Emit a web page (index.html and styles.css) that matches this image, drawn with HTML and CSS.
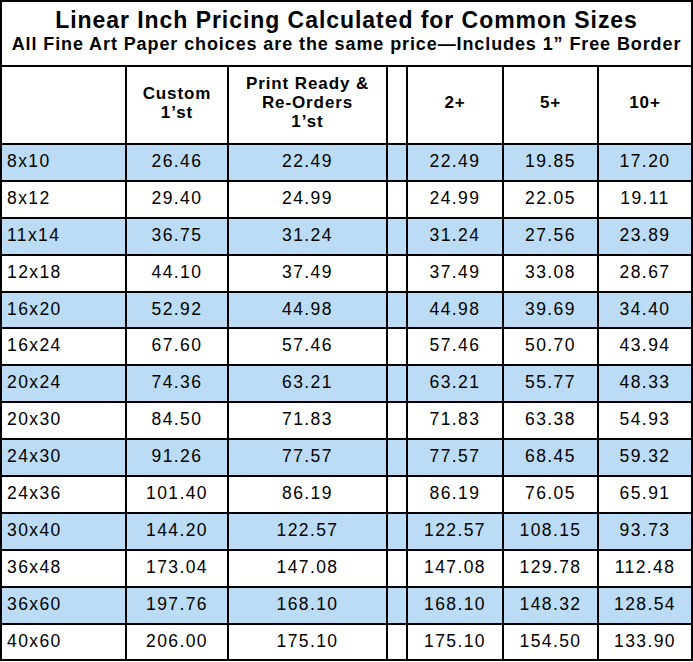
FILE: index.html
```html
<!DOCTYPE html>
<html lang="en">
<head>
<meta charset="utf-8">
<title>Linear Inch Pricing</title>
<link rel="stylesheet" href="styles.css">
</head>
<body>
<table class="pricing">
  <colgroup>
    <col class="c-size">
    <col class="c-custom">
    <col class="c-ready">
    <col class="c-gap">
    <col class="c-two">
    <col class="c-five">
    <col class="c-ten">
  </colgroup>
  <thead>
    <tr class="title-row">
      <th colspan="7" class="title-cell">
        <div class="title">Linear Inch Pricing Calculated for Common Sizes</div>
        <div class="subtitle">All Fine Art Paper choices are the same price—Includes 1” Free Border</div>
      </th>
    </tr>
    <tr class="head-row">
      <th></th>
      <th>Custom<br>1’st</th>
      <th>Print Ready &amp;<br>Re-Orders<br>1’st</th>
      <th></th>
      <th>2+</th>
      <th>5+</th>
      <th>10+</th>
    </tr>
  </thead>
  <tbody>
    <tr class="blue"><td class="size">8x10</td><td>26.46</td><td>22.49</td><td></td><td>22.49</td><td>19.85</td><td>17.20</td></tr>
    <tr><td class="size">8x12</td><td>29.40</td><td>24.99</td><td></td><td>24.99</td><td>22.05</td><td>19.11</td></tr>
    <tr class="blue"><td class="size">11x14</td><td>36.75</td><td>31.24</td><td></td><td>31.24</td><td>27.56</td><td>23.89</td></tr>
    <tr><td class="size">12x18</td><td>44.10</td><td>37.49</td><td></td><td>37.49</td><td>33.08</td><td>28.67</td></tr>
    <tr class="blue"><td class="size">16x20</td><td>52.92</td><td>44.98</td><td></td><td>44.98</td><td>39.69</td><td>34.40</td></tr>
    <tr><td class="size">16x24</td><td>67.60</td><td>57.46</td><td></td><td>57.46</td><td>50.70</td><td>43.94</td></tr>
    <tr class="blue"><td class="size">20x24</td><td>74.36</td><td>63.21</td><td></td><td>63.21</td><td>55.77</td><td>48.33</td></tr>
    <tr><td class="size">20x30</td><td>84.50</td><td>71.83</td><td></td><td>71.83</td><td>63.38</td><td>54.93</td></tr>
    <tr class="blue"><td class="size">24x30</td><td>91.26</td><td>77.57</td><td></td><td>77.57</td><td>68.45</td><td>59.32</td></tr>
    <tr><td class="size">24x36</td><td>101.40</td><td>86.19</td><td></td><td>86.19</td><td>76.05</td><td>65.91</td></tr>
    <tr class="blue"><td class="size">30x40</td><td>144.20</td><td>122.57</td><td></td><td>122.57</td><td>108.15</td><td>93.73</td></tr>
    <tr><td class="size">36x48</td><td>173.04</td><td>147.08</td><td></td><td>147.08</td><td>129.78</td><td>112.48</td></tr>
    <tr class="blue"><td class="size">36x60</td><td>197.76</td><td>168.10</td><td></td><td>168.10</td><td>148.32</td><td>128.54</td></tr>
    <tr><td class="size">40x60</td><td>206.00</td><td>175.10</td><td></td><td>175.10</td><td>154.50</td><td>133.90</td></tr>
  </tbody>
</table>
</body>
</html>
```
FILE: styles.css
```css
* {
  box-sizing: border-box;
}

html, body {
  margin: 0;
  padding: 0;
  background: #ffffff;
}

body {
  font-family: "Liberation Sans", Arial, sans-serif;
  color: #000000;
}

.pricing {
  width: 693px;
  table-layout: fixed;
  border-collapse: separate;
  border-spacing: 0;
}

.c-size { width: 127px; }
.c-custom { width: 102px; }
.c-ready { width: 159px; }
.c-gap { width: 20px; }
.c-two { width: 96px; }
.c-five { width: 95px; }
.c-ten { width: 94px; }

.pricing th,
.pricing td {
  padding: 0;
  border-right: 2px solid #000;
  border-bottom: 2px solid #000;
  text-align: center;
}

.pricing th:first-child,
.pricing td:first-child {
  border-left: 2px solid #000;
}

.pricing .title-cell {
  border-top: 2px solid #000;
  height: 67px;
  padding-top: 6px;
  vertical-align: top;
  font-weight: bold;
}

.title {
  font-size: 23px;
  line-height: 24px;
  letter-spacing: 0.95px;
}

.subtitle {
  font-size: 18px;
  line-height: 25px;
  letter-spacing: 0.9px;
}

.pricing .head-row th {
  height: 78px;
  font-size: 17px;
  line-height: 19px;
  letter-spacing: 0.9px;
  font-weight: bold;
  vertical-align: middle;
  padding-bottom: 5px;
}

.pricing tbody td {
  height: 36.9px;
  font-size: 17.5px;
  letter-spacing: 1.4px;
  vertical-align: middle;
  padding-bottom: 2px;
}

.pricing tbody td.size {
  text-align: left;
  padding-left: 5px;
}

.pricing tbody tr.blue td {
  background: #bcdcf6;
}
```
